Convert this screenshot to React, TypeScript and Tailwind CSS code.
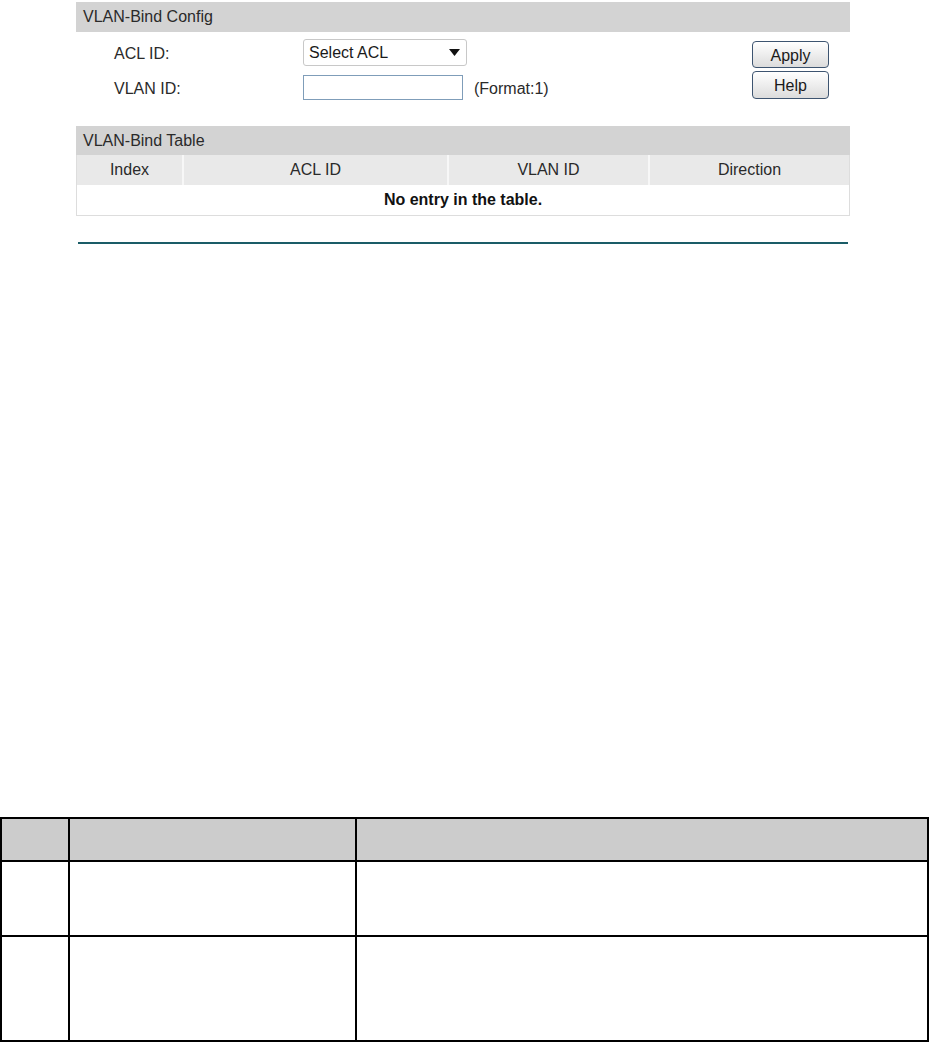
import React from 'react';

const columns = [
  { label: 'Index', width: 'w-[107px]' },
  { label: 'ACL ID', width: 'w-[265px]' },
  { label: 'VLAN ID', width: 'w-[201px]' },
  { label: 'Direction', width: 'flex-1' },
];

const App: React.FC = () => {
  return (
    <div className="w-[929px] h-[1042px] bg-white font-['Liberation_Sans',Arial,sans-serif] text-[16px] text-[#2a2a2a] flex flex-col">
      <div className="pt-[2px] pl-[76px]">
        <div className="w-[774px]">
          <div className="h-[30px] bg-[#d3d3d3] flex items-center pl-[7px]">VLAN-Bind Config</div>

          <div className="h-[94px] flex">
            <div className="pl-[38px] pt-[7px] flex flex-col gap-[9px]">
              <div className="flex items-center h-[27px]">
                <span className="w-[189px] pt-[2px]">ACL ID:</span>
                <div className="w-[164px] h-[27px] border border-[#c8c8c8] rounded-[3px] flex items-center justify-between pl-[5px] pr-[6px] text-[#1a1a1a]">
                  <span>Select ACL</span>
                  <svg width="11" height="7" viewBox="0 0 11 7">
                    <polygon points="0,0 11,0 5.5,7" fill="#111" />
                  </svg>
                </div>
              </div>
              <div className="flex items-center h-[25px]">
                <span className="w-[189px] pt-[2px]">VLAN ID:</span>
                <input className="w-[160px] h-[25px] border border-[#7f9db9] outline-none" />
                <span className="ml-[11px] pt-[2px]">(Format:1)</span>
              </div>
            </div>
            <div className="ml-auto mr-[21px] pt-[9px] flex flex-col gap-[3px]">
              <button
                type="button"
                className="w-[77px] h-[27px] border border-[#3d5470] rounded-[4px] bg-gradient-to-b from-white to-[#dcdcdc] text-[#1a1a1a] text-[16px] flex items-center justify-center pt-[2px]"
              >
                Apply
              </button>
              <button
                type="button"
                className="w-[77px] h-[28px] border border-[#3d5470] rounded-[4px] bg-gradient-to-b from-white to-[#dcdcdc] text-[#1a1a1a] text-[16px] flex items-center justify-center pt-[2px]"
              >
                Help
              </button>
            </div>
          </div>

          <div className="h-[29px] bg-[#d3d3d3] flex items-center pl-[7px]">VLAN-Bind Table</div>
          <div className="border-x border-b border-[#dddddd]">
            <div className="flex h-[30px] bg-[#e9e9e9]">
              {columns.map((c, i) => (
                <div
                  key={c.label}
                  className={`${c.width} flex items-center justify-center ${i < columns.length - 1 ? 'border-r-2 border-[#f7f7f7]' : ''}`}
                >
                  {c.label}
                </div>
              ))}
            </div>
            <div className="h-[30px] flex items-center justify-center font-bold text-[#111]">No entry in the table.</div>
          </div>
          <div className="mt-[26px] mx-[2px] h-[2px] bg-[#1a5c67]" />
        </div>
      </div>

      <div className="mt-auto">
        <table className="w-[929px] border-collapse table-fixed">
          <colgroup>
            <col className="w-[68px]" />
            <col className="w-[287px]" />
            <col />
          </colgroup>
          <tbody>
            <tr className="h-[43px] bg-[#cccccc]">
              <td className="border-2 border-black"></td>
              <td className="border-2 border-black"></td>
              <td className="border-2 border-black"></td>
            </tr>
            <tr className="h-[75px]">
              <td className="border-2 border-black"></td>
              <td className="border-2 border-black"></td>
              <td className="border-2 border-black"></td>
            </tr>
            <tr className="h-[105px]">
              <td className="border-2 border-black"></td>
              <td className="border-2 border-black"></td>
              <td className="border-2 border-black"></td>
            </tr>
          </tbody>
        </table>
      </div>
    </div>
  );
};

export default App;
